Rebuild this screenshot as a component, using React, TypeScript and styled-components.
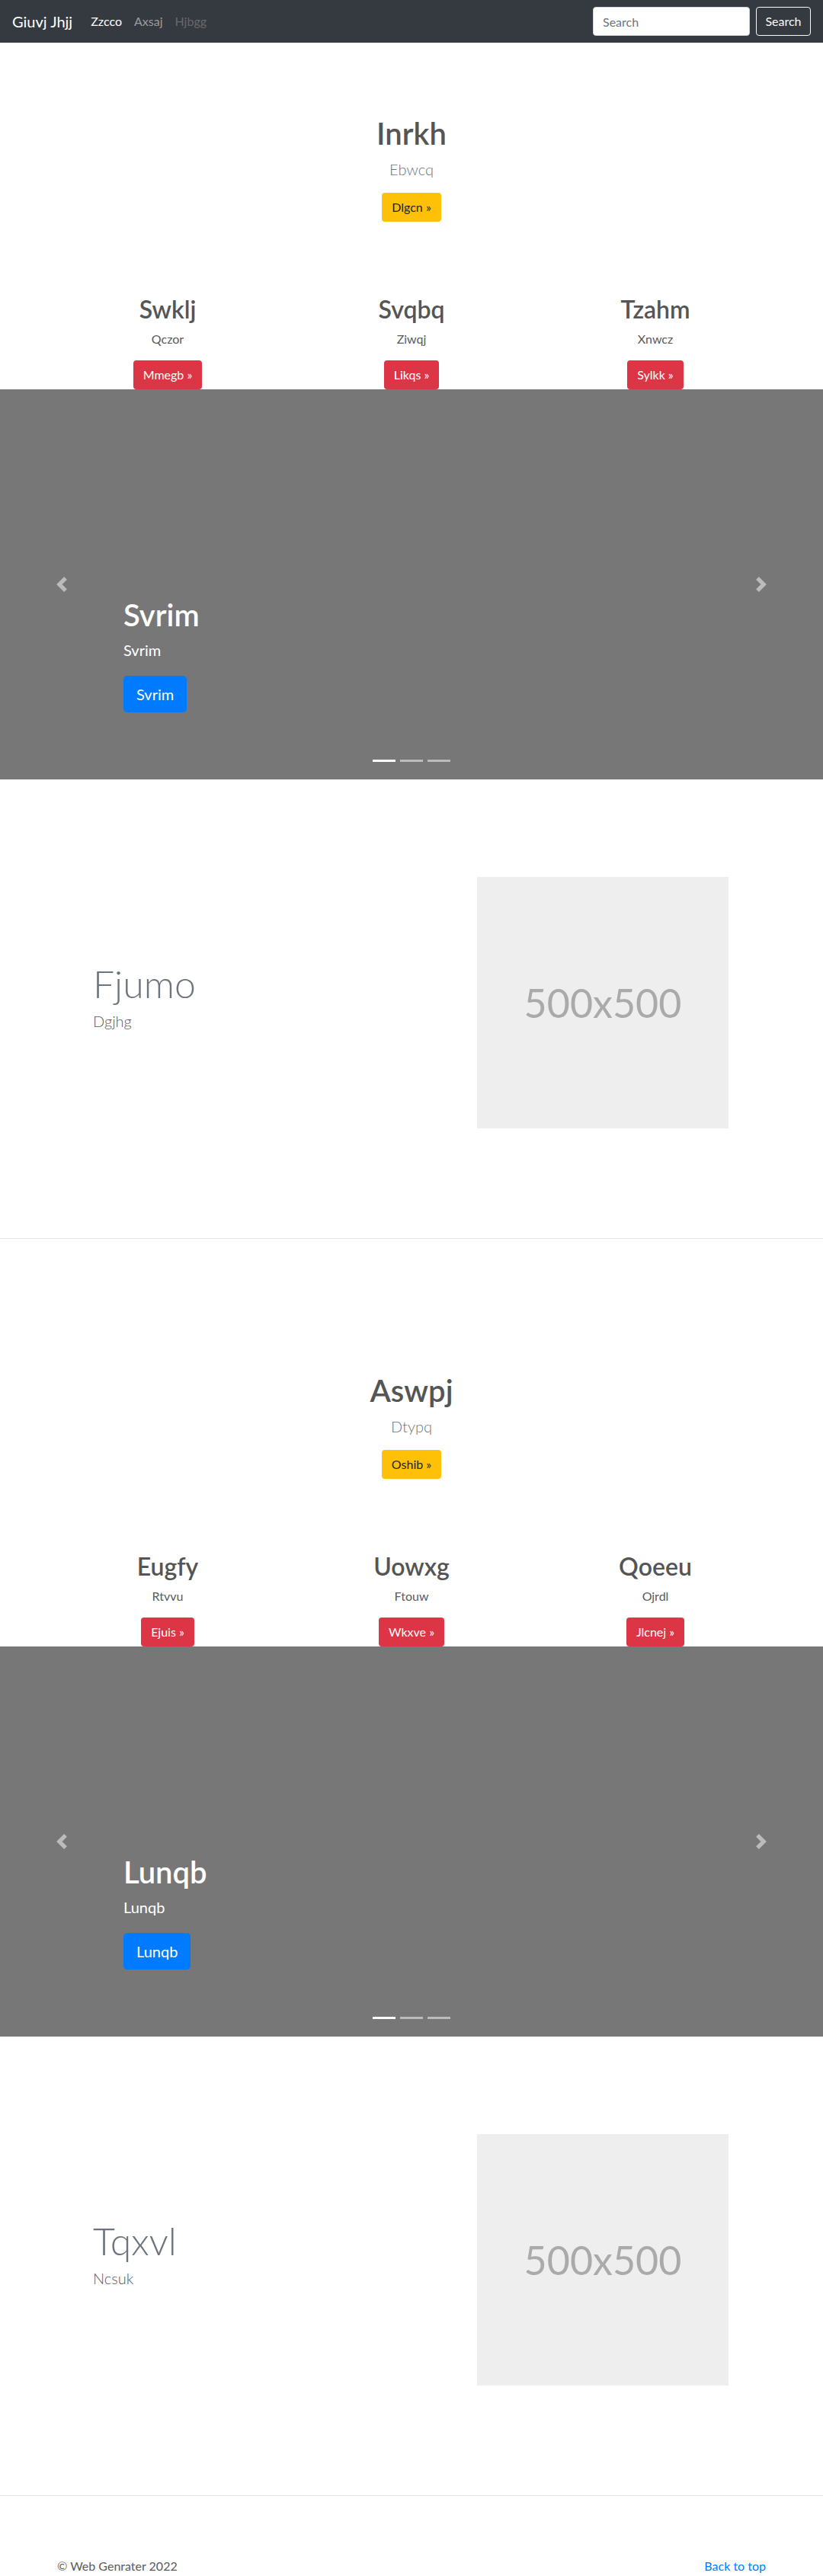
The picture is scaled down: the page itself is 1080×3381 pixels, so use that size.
import React from "react";
import styled, { createGlobalStyle, css } from "styled-components";

const FONT = `"Lato", "Open Sans", "Noto Sans", "Liberation Sans", sans-serif`;

const GlobalStyle = createGlobalStyle`
  *, *::before, *::after { box-sizing: border-box; }
  html, body { margin: 0; padding: 0; }
  body {
    font-family: ${FONT};
    font-size: 16px;
    line-height: 1.5;
    color: #5a5a5a;
    background: #fff;
  }
`;

/* ---------- Navbar ---------- */
const Navbar = styled.nav`
  display: flex;
  align-items: center;
  height: 56px;
  padding: 0 16px;
  background: #343a40;
`;
const Brand = styled.a`
  font-size: 20px;
  line-height: 30px;
  color: #fff;
  margin-right: 16px;
  text-decoration: none;
  white-space: nowrap;
`;
const NavList = styled.ul`
  display: flex;
  list-style: none;
  margin: 0;
  padding: 0;
`;
type LinkState = "active" | "normal" | "disabled";
const linkColors: Record<LinkState, string> = {
  active: "#fff",
  normal: "rgba(255,255,255,.5)",
  disabled: "rgba(255,255,255,.25)",
};
const NavLink = styled.a<{ $state: LinkState }>`
  display: block;
  padding: 8px;
  font-size: 16px;
  line-height: 24px;
  text-decoration: none;
  color: ${(p) => linkColors[p.$state]};
`;
const SearchForm = styled.form`
  margin-left: auto;
  display: flex;
  align-items: center;
`;
const SearchInput = styled.input`
  width: 206px;
  height: 38px;
  padding: 6px 12px;
  margin-right: 8px;
  font-family: inherit;
  font-size: 16px;
  line-height: 24px;
  color: #495057;
  background: #fff;
  border: 1px solid #ced4da;
  border-radius: 4px;
  outline: none;
  &::placeholder { color: #6c757d; }
`;
const SearchButton = styled.button`
  width: 72px;
  height: 38px;
  padding: 0;
  font-family: inherit;
  font-size: 16px;
  line-height: 24px;
  color: #f8f9fa;
  background: transparent;
  border: 1px solid #f8f9fa;
  border-radius: 4px;
`;

/* ---------- Buttons ---------- */
type Variant = "warning" | "danger" | "primary";
const variantStyles: Record<Variant, ReturnType<typeof css>> = {
  warning: css`background: #ffc107; color: #212529;`,
  danger: css`background: #dc3545; color: #fff;`,
  primary: css`background: #007bff; color: #fff;`,
};
const Btn = styled.a<{ $variant: Variant; $large?: boolean }>`
  display: inline-block;
  border: 1px solid transparent;
  text-decoration: none;
  white-space: nowrap;
  ${(p) => variantStyles[p.$variant]}
  ${(p) =>
    p.$large
      ? css`padding: 8px 16px; font-size: 20px; line-height: 30px; border-radius: 4.8px;`
      : css`padding: 6px 12px; font-size: 16px; line-height: 24px; border-radius: 4px;`}
`;

/* ---------- Hero ---------- */
const Hero = styled.section`
  padding-top: 95px;
  text-align: center;
`;
const HeroTitle = styled.h1`
  margin: 0 0 8px;
  font-size: 40px;
  line-height: 48px;
  font-weight: 600;
  color: #555;
`;
const Lead = styled.p<{ $muted?: boolean }>`
  margin: 0 0 16px;
  font-size: 20px;
  line-height: 30px;
  font-weight: 300;
  color: ${(p) => (p.$muted ? "#6c757d" : "#5a5a5a")};
`;

/* ---------- Columns ---------- */
const Columns = styled.div`
  display: grid;
  grid-template-columns: repeat(3, 1fr);
  width: 960px;
  margin: 96px auto 0;
  text-align: center;
`;
const Column = styled.div`
  padding: 0 15px;
`;
const ColTitle = styled.h2`
  margin: 0 0 8px;
  font-size: 32px;
  line-height: 38px;
  font-weight: 600;
  color: #555;
`;
const ColText = styled.p`
  margin: 0 0 16px;
  font-size: 16px;
  line-height: 24px;
`;

/* ---------- Carousel ---------- */
const Carousel = styled.div`
  position: relative;
  height: 512px;
  background: #777;
  display: flex;
  align-items: flex-end;
  padding: 0 15% 88px;
`;
const Caption = styled.div`
  color: #fff;
  text-align: left;
`;
const CaptionTitle = styled.h1`
  margin: 0 0 8px;
  font-size: 40px;
  line-height: 48px;
  font-weight: 600;
`;
const CaptionText = styled.p`
  margin: 0 0 20px;
  font-size: 20px;
  line-height: 28px;
`;
const Control = styled.a<{ $side: "left" | "right" }>`
  position: absolute;
  top: 0;
  bottom: 0;
  ${(p) => (p.$side === "left" ? "left: 0;" : "right: 0;")}
  width: 15%;
  display: flex;
  align-items: center;
  justify-content: center;
  opacity: 0.5;
`;
const Indicators = styled.ol`
  position: absolute;
  left: 0;
  right: 0;
  bottom: 23px;
  display: flex;
  justify-content: center;
  margin: 0;
  padding: 0;
  list-style: none;
`;
const Indicator = styled.li<{ $active?: boolean }>`
  width: 30px;
  height: 3px;
  margin: 0 3px;
  background: #fff;
  opacity: ${(p) => (p.$active ? 1 : 0.5)};
`;

/* ---------- Featurette ---------- */
const Featurette = styled.section`
  padding: 128px 0 64px;
`;
const FeatureRow = styled.div`
  width: 960px;
  margin: 0 auto;
  padding: 0 64px 0 62px;
  display: grid;
  grid-template-columns: 1fr 330px;
  align-items: center;
`;
const FeatureHeading = styled.h2`
  margin: 0 0 4px;
  font-size: 50px;
  line-height: 60px;
  font-weight: 300;
  color: #6c757d;
`;
const Placeholder = styled.div`
  width: 330px;
  height: 330px;
  background: #eee;
  display: flex;
  align-items: center;
  justify-content: center;
  font-size: 52px;
  color: #aaa;
`;
const Divider = styled.hr`
  margin: 80px 0;
  border: 0;
  border-top: 1px solid rgba(0, 0, 0, 0.1);
  height: 0;
`;

/* ---------- Footer ---------- */
const Footer = styled.footer`
  width: 930px;
  margin: 0 auto;
  display: flex;
  justify-content: space-between;
  font-size: 16px;
  line-height: 24px;
`;
const FooterText = styled.p`
  margin: 0;
`;
const FooterLink = styled.a`
  color: #007bff;
  text-decoration: none;
`;

/* ---------- Icons ---------- */
const ChevronLeft = () => (
  <svg width="20" height="20" viewBox="0 0 8 8" fill="#fff">
    <path d="M5.25 0l-4 4 4 4 1.5-1.5L4.25 4l2.5-2.5L5.25 0z" />
  </svg>
);
const ChevronRight = () => (
  <svg width="20" height="20" viewBox="0 0 8 8" fill="#fff">
    <path d="M2.75 0l-1.5 1.5L3.75 4l-2.5 2.5L2.75 8l4-4-4-4z" />
  </svg>
);

/* ---------- Data ---------- */
type SectionData = {
  hero: { title: string; lead: string; button: string };
  cols: { title: string; text: string; button: string }[];
  slide: string;
  feature: { title: string; text: string };
};

const sections: SectionData[] = [
  {
    hero: { title: "Inrkh", lead: "Ebwcq", button: "Dlgcn »" },
    cols: [
      { title: "Swklj", text: "Qczor", button: "Mmegb »" },
      { title: "Svqbq", text: "Ziwqj", button: "Likqs »" },
      { title: "Tzahm", text: "Xnwcz", button: "Sylkk »" },
    ],
    slide: "Svrim",
    feature: { title: "Fjumo", text: "Dgjhg" },
  },
  {
    hero: { title: "Aswpj", lead: "Dtypq", button: "Oshib »" },
    cols: [
      { title: "Eugfy", text: "Rtvvu", button: "Ejuis »" },
      { title: "Uowxg", text: "Ftouw", button: "Wkxve »" },
      { title: "Qoeeu", text: "Ojrdl", button: "Jlcnej »" },
    ],
    slide: "Lunqb",
    feature: { title: "Tqxvl", text: "Ncsuk" },
  },
];

const Block = ({ data }: { data: SectionData }) => (
  <>
    <Hero>
      <HeroTitle>{data.hero.title}</HeroTitle>
      <Lead $muted>{data.hero.lead}</Lead>
      <Btn href="#" $variant="warning">{data.hero.button}</Btn>
    </Hero>
    <Columns>
      {data.cols.map((c) => (
        <Column key={c.title}>
          <ColTitle>{c.title}</ColTitle>
          <ColText>{c.text}</ColText>
          <Btn href="#" $variant="danger">{c.button}</Btn>
        </Column>
      ))}
    </Columns>
    <Carousel>
      <Caption>
        <CaptionTitle>{data.slide}</CaptionTitle>
        <CaptionText>{data.slide}</CaptionText>
        <Btn href="#" $variant="primary" $large>{data.slide}</Btn>
      </Caption>
      <Control href="#" $side="left"><ChevronLeft /></Control>
      <Control href="#" $side="right"><ChevronRight /></Control>
      <Indicators>
        <Indicator $active />
        <Indicator />
        <Indicator />
      </Indicators>
    </Carousel>
    <Featurette>
      <FeatureRow>
        <div>
          <FeatureHeading>{data.feature.title}</FeatureHeading>
          <Lead>{data.feature.text}</Lead>
        </div>
        <Placeholder>500x500</Placeholder>
      </FeatureRow>
    </Featurette>
    <Divider />
  </>
);

export default function App() {
  return (
    <>
      <GlobalStyle />
      <Navbar>
        <Brand href="#">Giuvj Jhjj</Brand>
        <NavList>
          <li><NavLink href="#" $state="active">Zzcco</NavLink></li>
          <li><NavLink href="#" $state="normal">Axsaj</NavLink></li>
          <li><NavLink href="#" $state="disabled">Hjbgg</NavLink></li>
        </NavList>
        <SearchForm onSubmit={(e) => e.preventDefault()}>
          <SearchInput type="text" placeholder="Search" />
          <SearchButton type="submit">Search</SearchButton>
        </SearchForm>
      </Navbar>
      <main>
        {sections.map((s) => (
          <Block key={s.hero.title} data={s} />
        ))}
      </main>
      <Footer>
        <FooterText>© Web Genrater 2022</FooterText>
        <FooterText><FooterLink href="#">Back to top</FooterLink></FooterText>
      </Footer>
    </>
  );
}
